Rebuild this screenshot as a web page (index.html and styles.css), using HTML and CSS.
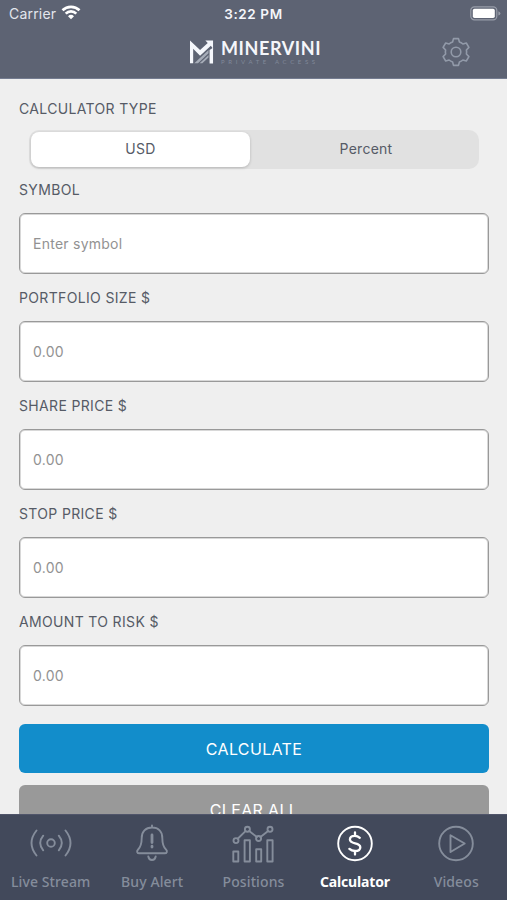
FILE: index.html
```html
<!DOCTYPE html>
<html lang="en">
<head>
<meta charset="utf-8">
<title>Minervini Private Access</title>
<link rel="stylesheet" href="styles.css">
</head>
<body>
<div class="app">
  <header class="header">
    <div class="status">
      <div class="carrier"><span>Carrier</span>
        <svg width="20" height="15" viewBox="0 0 20 15" fill="none" stroke="#fff" stroke-width="2.7"><path d="M1.5 5.3a12.2 12.2 0 0 1 17 0M4.7 8.6a7.6 7.6 0 0 1 10.6 0"/><path d="M7 11.2a4.400 4.400 0 0 1 6 0L10 14.200z" fill="#fff" stroke="none"/></svg>
      </div>
      <span class="time">3:22 PM</span>
      <div class="battery">
        <svg width="31" height="15" viewBox="0 0 31 15"><rect x=".8" y=".8" width="26" height="13" rx="3.6" fill="none" stroke="#989da9" stroke-width="1.2"/><rect x="2.800" y="2.700" width="22" height="9.200" rx="1.700" fill="#fff"/><path d="M28.400 5.200q2 .7 2 2.200t-2 2.200z" fill="#989da9"/></svg>
      </div>
    </div>
    <div class="nav">
      <div class="brand">
        <svg width="24" height="26" viewBox="0 0 25 26"><path d="M0 1l10.500 9.800L18.500 3.600 16 1H24v8.500l-2.300-2.900L10.500 17 3.300 9.500v15.300H0z" fill="#f5f7fc"/><path d="M24 8.500V25h-3.600V11z" fill="#f5f7fc"/><path d="M4.500 24.800L19.300 11v3.400L8.300 24.800zM10 24.800l9.300-8.800v2.800l-6.400 6z" fill="#a6acb8"/></svg>
        <div class="wordmark"><span class="brand-name">MINERVINI</span><span class="brand-sub">PRIVATE ACCESS</span></div>
      </div>
      <svg class="gear" width="30" height="30" viewBox="-15 -15 30 30" fill="none" stroke="#929aa9" stroke-width="1.600" stroke-linejoin="round"><path d="M-2.500-13.400H2.500L3.400-10Q5.300-9.400 6.900-8L10.300-9L12.900-4.600L10.400-2Q10.800 0 10.400 2L12.900 4.600L10.300 9L6.900 8Q5.300 9.400 3.400 10L2.500 13.400H-2.500L-3.400 10Q-5.300 9.400-6.900 8L-10.300 9L-12.900 4.600L-10.400 2Q-10.800 0-10.400-2L-12.900-4.600L-10.300-9L-6.900-8Q-5.300-9.400-3.400-10Z"/><circle r="4.800"/></svg>
    </div>
  </header>
  <main class="content">
    <h1 class="label">CALCULATOR TYPE</h1>
    <div class="segments"><button class="segment selected">USD</button><button class="segment">Percent</button></div>
    <label class="field"><span class="label">SYMBOL</span><input placeholder="Enter symbol"></label>
    <label class="field"><span class="label">PORTFOLIO SIZE $</span><input placeholder="0.00"></label>
    <label class="field"><span class="label">SHARE PRICE $</span><input placeholder="0.00"></label>
    <label class="field"><span class="label">STOP PRICE $</span><input placeholder="0.00"></label>
    <label class="field"><span class="label">AMOUNT TO RISK $</span><input placeholder="0.00"></label>
    <button class="action">CALCULATE</button>
    <button class="action clear">CLEAR ALL</button>
  </main>
  <nav class="tabs">
    <a class="tab"><svg width="44" height="40" viewBox="0 0 44 40"><circle cx="22" cy="20" r="3.800"/><path d="M14.200 12.700q-6 7.300 0 14.600M29.800 12.700q6 7.300 0 14.600M7.500 7.500q-10 12.500 0 25M36.500 7.500q10 12.500 0 25"/></svg><span>Live Stream</span></a>
    <a class="tab"><svg width="44" height="40" viewBox="0 0 44 40"><path d="M22 2.500v2M22 4.500c-6.500 0-10.300 4.200-10.300 10.500 0 6-1 9-3.800 11.700-1.500 1.500-.8 3.600 1.400 3.600h25.400c2.200 0 2.900-2.100 1.400-3.600-2.800-2.700-3.800-5.700-3.800-11.700C32.300 8.700 28.500 4.500 22 4.500zM18.300 33.500c.8 4.600 6.600 4.600 7.400 0"/><path d="M22 12v7.500M22 23.200v.8" stroke-width="2.800"/></svg><span>Buy Alert</span></a>
    <a class="tab"><svg width="44" height="40" viewBox="0 0 44 40"><path d="M2.300 28.500h5v10h-5zM13.600 17.300h5.300v21.200h-5.300zM25.200 26.300h5v12.200h-5zM36.300 17.300h5.300v21.200h-5.300zM6.700 15.800l7.800-7.700M18.200 8l7.600 6M29.500 14l7.600-6"/><circle cx="5" cy="17.600" r="2.500"/><circle cx="16.400" cy="6.300" r="2.500"/><circle cx="27.600" cy="15.500" r="2.500"/><circle cx="39" cy="6.300" r="2.500"/></svg><span>Positions</span></a>
    <a class="tab active"><svg width="44" height="40" viewBox="0 0 44 40"><circle cx="22" cy="20.500" r="16.800"/><path d="M26.800 14.800c-1.700-1.500-3.300-1.900-5-1.900-2.800 0-4.900 1.300-4.900 3.600 0 5.200 10.400 2.500 10.400 7.700 0 2.400-2.200 3.800-5.200 3.800-2.100 0-4.200-.6-5.700-2.100M22 9.500v3.300M22 28v3.500" stroke-width="2.300"/></svg><span>Calculator</span></a>
    <a class="tab"><svg width="44" height="40" viewBox="0 0 44 40"><circle cx="22" cy="20.500" r="16.800"/><path d="M16.500 12.300L30.700 20.500L16.500 29z"/></svg><span>Videos</span></a>
  </nav>
</div>
</body>
</html>
```
FILE: styles.css
```css
* { box-sizing: border-box; }
body { margin: 0; font-family: Inter, "Liberation Sans", sans-serif; color: #565b66; background: #efefef; }
button, input { font: inherit; color: inherit; border: 0; margin: 0; }
.app { height: 900px; display: grid; grid-template-rows: 79px 735px 86px; overflow: hidden; }
.header { background: #5d6373; color: #f5f6fa; border-bottom: 1px solid #747c90; }
.status { display: grid; grid-template-columns: 1fr auto 1fr; align-items: center; height: 27px; font-size: 14px; }
.carrier { display: flex; align-items: center; gap: 5px; padding-left: 9px; letter-spacing: .2px; color: #e3e6ed; }
.carrier svg { margin-top: -3px; }
.time { font-weight: 600; font-size: 13.5px; letter-spacing: .6px; }
.battery { display: flex; justify-content: flex-end; padding-right: 6px; }
.nav { display: grid; grid-template-columns: 1fr auto 1fr; align-items: center; height: 50px; }
.brand { grid-column: 2; display: flex; align-items: center; gap: 7px; margin-left: 4px; }
.wordmark { display: flex; flex-direction: column; width: 100px; }
.brand-name { font: 700 18px/16px Lato, sans-serif; letter-spacing: .6px; white-space: nowrap; }
.brand-sub { font: 6px/7px Lato, sans-serif; margin-top: 2px; letter-spacing: 3.65px; color: #81899a; white-space: nowrap; }
.gear { justify-self: end; margin-right: 36px; }
.content { overflow: hidden; padding: 20px 18px 0 19px; display: flex; flex-direction: column; }
.content > * { flex-shrink: 0; }
.label { display: block; margin: 0; height: 20px; font-size: 14px; line-height: 20px; font-weight: 400; letter-spacing: .34px; }
.segments { display: flex; height: 39px; margin: 11px 10px 11px 10px; background: #e1e1e1; border-radius: 10px; padding: 2px; }
.segment { flex: 1; background: none; border-radius: 8px; font-size: 14px; line-height: 17px; letter-spacing: .25px; padding: 0 0 2px 5px; }
.segment.selected { background: #fff; flex: 0 0 219px; padding-left: 0; box-shadow: 0 1px 3px #0003; }
.field { height: 94px; margin-bottom: 14px; display: flex; flex-direction: column; gap: 13px; }
.field input { height: 61px; width: 100%; border: 1px solid #999; box-shadow: inset 0 0 0 1px #d8d8d8; border-radius: 6px; background: #fff; padding: 0 13px; font-size: 14px; letter-spacing: .25px; outline: 0; }
input::placeholder { color: #929292; opacity: 1; }
.action { height: 49px; margin: 4px 0 12px; border-radius: 6px; background: #128dcb; color: #fff; font-size: 16px; letter-spacing: .35px; padding: 0; }
.action.clear { margin-top: 0; background: #999; }
.tabs { display: grid; grid-template-columns: repeat(5, 1fr); background: #42495b; border-top: 1px solid #50556a; }
.tab { display: flex; flex-direction: column; align-items: center; padding-top: 8px; color: #858d9b; font: 500 14px/20px "Noto Sans", sans-serif; letter-spacing: .1px; white-space: nowrap; }
.tab svg { fill: none; stroke: currentColor; stroke-width: 1.9; stroke-linecap: round; stroke-linejoin: round; }
.tab span { margin-top: 9px; }
.tab.active { color: #fff; font-weight: 700; letter-spacing: -.15px; }
```
